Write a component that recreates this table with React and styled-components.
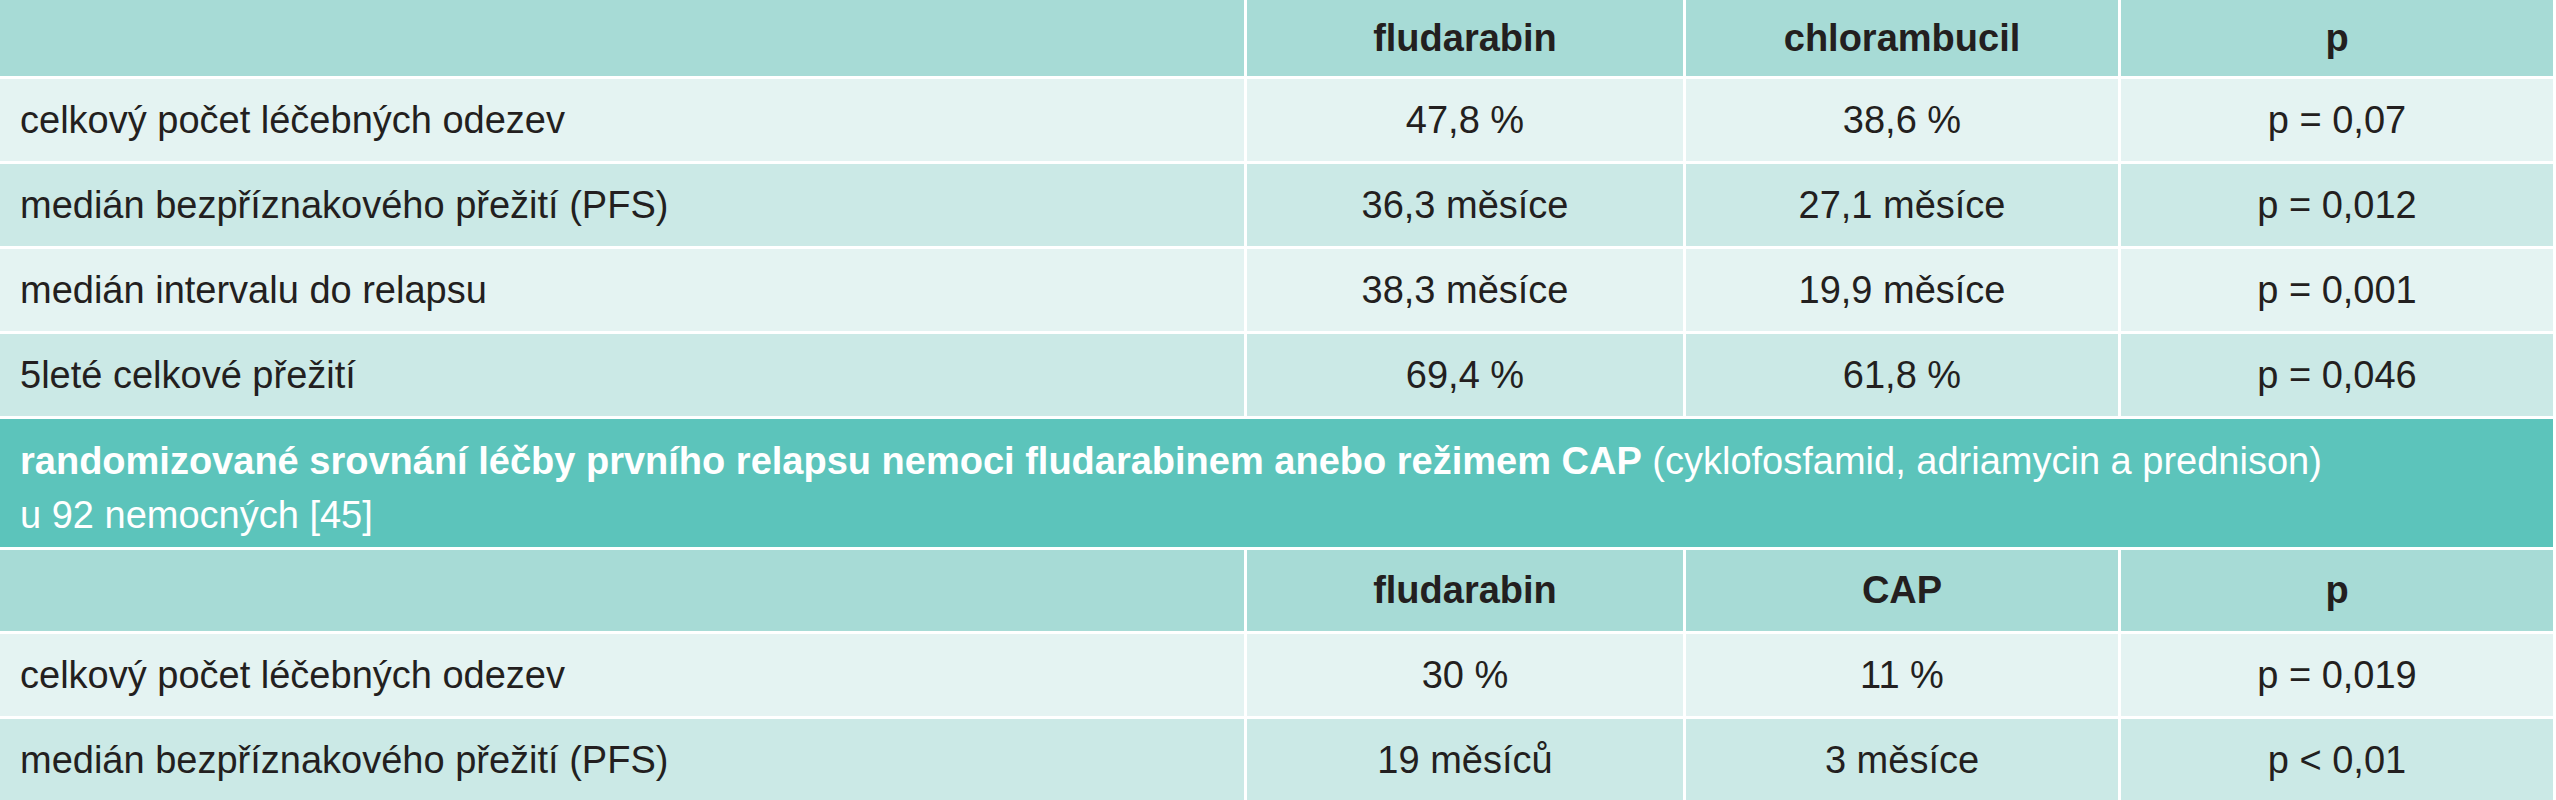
import React from 'react'
import styled, { createGlobalStyle } from 'styled-components'

const GlobalStyle = createGlobalStyle`
  html, body {
    margin: 0;
    padding: 0;
    background: #ffffff;
  }
  body {
    font-family: 'Liberation Sans', Arial, sans-serif;
    color: #231f20;
  }
`

const colors = {
  head: '#a7dbd6',
  light: '#e4f3f2',
  alt: '#cbe9e6',
  section: '#5cc4bb'
}

const Table = styled.div`
  display: flex;
  flex-direction: column;
  gap: 3px;
  width: 2553px;
`

const Row = styled.div`
  display: grid;
  grid-template-columns: 1244px 436px 432px 1fr;
  column-gap: 3px;
  height: ${({ height }) => { return height || 82 }}px;
`

const Cell = styled.div`
  display: flex;
  align-items: center;
  justify-content: ${({ first }) => { return first ? 'flex-start' : 'center' }};
  padding: 0 20px;
  background: ${({ tone }) => { return colors[tone] }};
  font-size: 38px;
  font-weight: ${({ bold }) => { return bold ? 700 : 400 }};
  white-space: nowrap;
`

const Section = styled.div`
  display: flex;
  align-items: center;
  box-sizing: border-box;
  height: 128px;
  padding: 10px 20px 0;
  background: ${colors.section};
  color: #ffffff;
  font-size: 38px;
  line-height: 54px;
`

const Strong = styled.b`
  font-weight: 700;
`

const first = [
  ['celkový počet léčebných odezev', '47,8 %', '38,6 %', 'p = 0,07'],
  ['medián bezpříznakového přežití (PFS)', '36,3 měsíce', '27,1 měsíce', 'p = 0,012'],
  ['medián intervalu do relapsu', '38,3 měsíce', '19,9 měsíce', 'p = 0,001'],
  ['5leté celkové přežití', '69,4 %', '61,8 %', 'p = 0,046']
]

const second = [
  ['celkový počet léčebných odezev', '30 %', '11 %', 'p = 0,019'],
  ['medián bezpříznakového přežití (PFS)', '19 měsíců', '3 měsíce', 'p < 0,01']
]

const HeadRow = ({ labels, height }) => {
  return (
    <Row height={height}>
      <Cell first tone='head' />
      {labels.map((label) => {
        return <Cell bold key={label} tone='head'>{label}</Cell>
      })}
    </Row>
  )
}

const DataRows = ({ rows }) => {
  return rows.map((row, rowIdx) => {
    const tone = rowIdx % 2 === 0 ? 'light' : 'alt'
    return (
      <Row key={row[0] + rowIdx}>
        {row.map((value, colIdx) => {
          return <Cell first={colIdx === 0} key={colIdx} tone={tone}>{value}</Cell>
        })}
      </Row>
    )
  })
}

const App = () => {
  return (
    <>
      <GlobalStyle />
      <Table>
        <HeadRow height={76} labels={['fludarabin', 'chlorambucil', 'p']} />
        <DataRows rows={first} />
        <Section>
          <div>
            <Strong>randomizované srovnání léčby prvního relapsu nemoci fludarabinem anebo režimem CAP</Strong>
            {' (cyklofosfamid, adriamycin a prednison)'}
            <br />
            u 92 nemocných [45]
          </div>
        </Section>
        <HeadRow height={81} labels={['fludarabin', 'CAP', 'p']} />
        <DataRows rows={second} />
      </Table>
    </>
  )
}

export default App
